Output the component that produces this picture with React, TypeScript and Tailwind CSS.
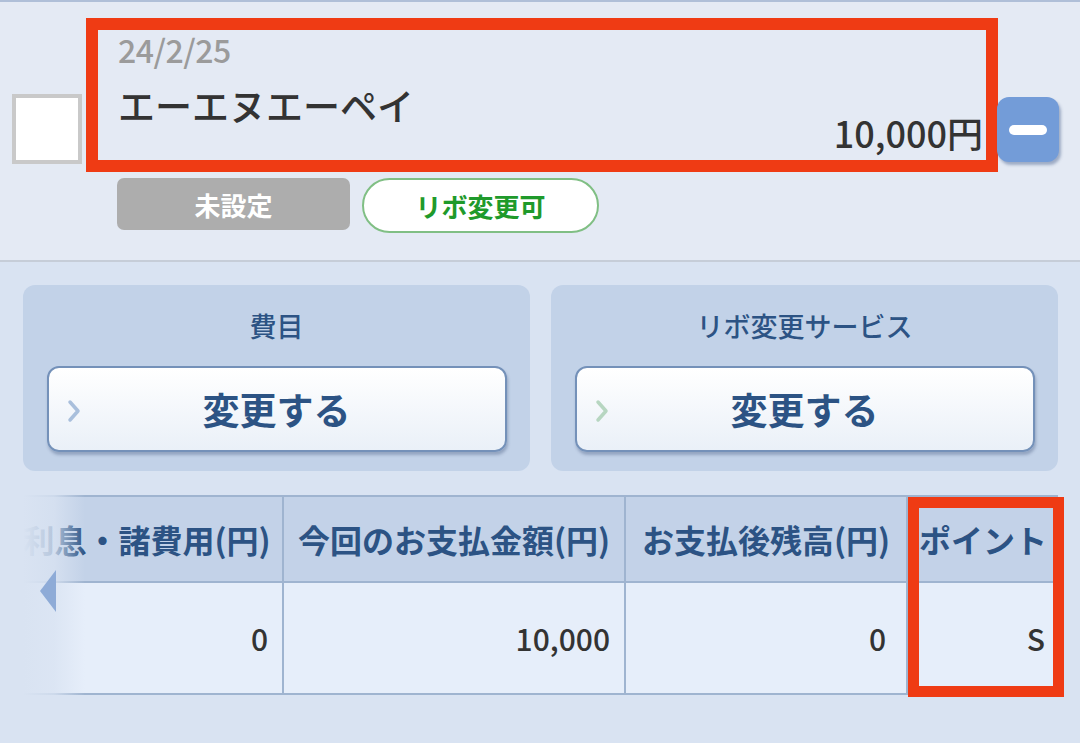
import React from "react";

const font = { fontFamily: '"Noto Sans CJK JP", "Noto Sans", sans-serif' };

function ActionCard({ title, chevron }: { title: string; chevron: string }) {
  return (
    <div className="w-[507px] h-[186px] rounded-[12px] bg-[#c2d2e8] px-[24px] pt-[24px] flex flex-col items-center">
      <div className="h-[34px] leading-[34px] text-[27px] font-medium text-[#2c5384]">{title}</div>
      <div className="mt-[23px] w-[460px] h-[86px] rounded-[12px] border-2 border-[#7491b9] bg-gradient-to-b from-white to-[#eaf0f8] shadow-[1px_3px_3px_rgba(60,80,120,0.35)] flex items-center relative">
        <svg className="absolute left-[18px] top-[31px]" width="14" height="24" viewBox="0 0 14 24">
          <polyline points="3,3 11,12 3,21" fill="none" stroke={chevron} strokeWidth="3.5" strokeLinecap="round" strokeLinejoin="round" />
        </svg>
        <div className="flex-1 text-center text-[37px] font-bold text-[#2c5384] leading-none">変更する</div>
      </div>
    </div>
  );
}

export default function App() {
  return (
    <div style={font} className="w-[1080px] h-[743px] overflow-hidden bg-[#d9e3f2]">
      {/* Top section */}
      <div className="h-[262px] bg-[#e4eaf4] border-t-2 border-[#afbfd8] border-b-2 border-b-[#c6cdd8] relative">
        <div className="flex items-start pt-[16px]">
          {/* checkbox */}
          <div className="ml-[12px] mt-[76px] w-[70px] h-[70px] bg-white border-[4px] border-[#c9c9c9] shrink-0" />
          {/* annotated content */}
          <div className="ml-[4px] w-[912px] h-[154px] border-[12px] border-[#ef3b14] pl-[20px] pr-[3px] flex flex-col">
            <div className="h-[38px] leading-[38px] text-[32px] font-medium text-[#9b9b9b] tracking-[-0.5px]">24/2/25</div>
            <div className="flex-1 flex justify-between">
              <div className="mt-[15px] h-[44px] leading-[44px] text-[37px] font-medium text-[#333333]">エーエヌエーペイ</div>
              <div className="self-end mb-[6px] h-[44px] leading-[44px] text-[36px] font-medium text-[#333333]">10,000円</div>
            </div>
          </div>
          {/* minus button */}
          <div className="-ml-[1px] mt-[79px] w-[62px] h-[65px] rounded-[12px] bg-[#739cd8] shadow-[2px_3px_3px_rgba(70,95,140,0.45)] flex items-center justify-center shrink-0">
            <div className="w-[38px] h-[10px] rounded-full bg-white" />
          </div>
        </div>
        <div className="flex gap-[12px] ml-[117px] mt-[6px] items-start">
          <div className="w-[233px] h-[52px] rounded-[7px] bg-[#adadad] flex items-center justify-center text-white text-[26px] font-bold">未設定</div>
          <div className="w-[237px] h-[55px] rounded-full bg-white border-2 border-[#80bf84] flex items-center justify-center text-[#1f9a2b] text-[26px] font-bold">リボ変更可</div>
        </div>
      </div>

      {/* Cards */}
      <div className="flex gap-[21px] px-[23px] pt-[23px]">
        <ActionCard title="費目" chevron="#a9bfdc" />
        <ActionCard title="リボ変更サービス" chevron="#b7d6c1" />
      </div>

      {/* Table */}
      <div className="relative ml-[23px] mt-[24px] w-[1035px]">
        <div className="overflow-hidden border-t-2 border-b-2 border-[#9fb4d0]">
          <div className="flex -ml-[12px]">
            {[
              { w: 273, h: "利息・諸費用(円)", v: "0", pr: 14 },
              { w: 342, h: "今回のお支払金額(円)", v: "10,000", pr: 14 },
              { w: 282, h: "お支払後残高(円)", v: "0", pr: 20 },
              { w: 150, h: "ポイント", v: "S", pr: 13 },
            ].map((c, i) => (
              <div
                key={i}
                style={{ width: c.w }}
                className={`shrink-0 flex flex-col ${i < 3 ? "border-r-2 border-[#9fb4d0]" : ""}`}
              >
                <div className="h-[86px] bg-[#c3d2e8] border-b-2 border-[#9fb4d0] flex items-center justify-center text-[32px] font-bold text-[#2c5384] whitespace-nowrap">
                  {c.h}
                </div>
                <div
                  style={{ paddingRight: c.pr }}
                  className="h-[110px] bg-[#e6eefa] flex items-center justify-end text-[30px] font-medium text-[#333333]"
                >
                  {c.v}
                </div>
              </div>
            ))}
          </div>
        </div>
        {/* left fade */}
        <div className="absolute left-0 top-0 w-[62px] h-[202px] bg-gradient-to-r from-[#d9e3f2] via-[#d9e3f2]/80 to-transparent pointer-events-none" />
        <svg className="absolute left-[17px] top-[75px]" width="17" height="42" viewBox="0 0 17 42">
          <polygon points="16,0 0,21 16,42" fill="#8eabd7" />
        </svg>
        {/* annotation box */}
        <div className="absolute left-[885px] top-[2px] w-[156px] h-[200px] border-[11px] border-[#ef3b14] pointer-events-none" />
      </div>
    </div>
  );
}
